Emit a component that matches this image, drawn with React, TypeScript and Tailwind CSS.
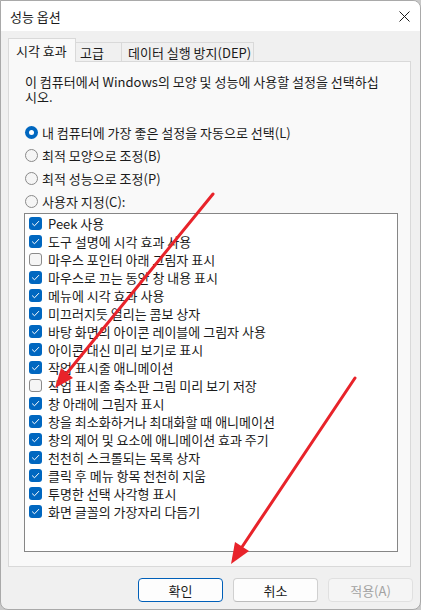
import React from "react";

const font = { fontFamily: '"Noto Sans CJK KR", "Noto Sans", sans-serif' };

const items: [string, boolean][] = [
  ["Peek 사용", true],
  ["도구 설명에 시각 효과 사용", true],
  ["마우스 포인터 아래 그림자 표시", false],
  ["마우스로 끄는 동안 창 내용 표시", true],
  ["메뉴에 시각 효과 사용", true],
  ["미끄러지듯 열리는 콤보 상자", true],
  ["바탕 화면의 아이콘 레이블에 그림자 사용", true],
  ["아이콘 대신 미리 보기로 표시", true],
  ["작업 표시줄 애니메이션", true],
  ["작업 표시줄 축소판 그림 미리 보기 저장", false],
  ["창 아래에 그림자 표시", true],
  ["창을 최소화하거나 최대화할 때 애니메이션", true],
  ["창의 제어 및 요소에 애니메이션 효과 주기", true],
  ["천천히 스크롤되는 목록 상자", true],
  ["클릭 후 메뉴 항목 천천히 지움", true],
  ["투명한 선택 사각형 표시", true],
  ["화면 글꼴의 가장자리 다듬기", true],
];

const radios: [string, boolean][] = [
  ["내 컴퓨터에 가장 좋은 설정을 자동으로 선택(L)", true],
  ["최적 모양으로 조정(B)", false],
  ["최적 성능으로 조정(P)", false],
  ["사용자 지정(C):", false],
];

function Check({ on }: { on: boolean }) {
  if (!on)
    return (
      <div className="w-[13px] h-[13px] rounded-[3px] border border-[#8a8a8a] bg-[#f5f5f5] shrink-0" />
    );
  return (
    <div className="w-[13px] h-[13px] rounded-[3px] bg-[#0067c0] shrink-0 flex items-center justify-center">
      <svg width="13" height="13" viewBox="0 0 13 13">
        <path d="M3.4 6.8 L5.5 8.8 L9.7 4.4" fill="none" stroke="#ffffff" strokeWidth="1" strokeLinecap="round" strokeLinejoin="round" />
      </svg>
    </div>
  );
}

function Radio({ on }: { on: boolean }) {
  if (on)
    return (
      <div className="w-[13px] h-[13px] rounded-full bg-[#0067c0] shrink-0 flex items-center justify-center">
        <div className="w-[5px] h-[5px] rounded-full bg-white" />
      </div>
    );
  return <div className="w-[13px] h-[13px] rounded-full border border-[#8a8a8a] bg-[#f5f5f5] shrink-0" />;
}

export default function App() {
  return (
    <div className="relative w-[421px] h-[610px] bg-[#c9c9c9] overflow-hidden text-[13px] text-[#1b1b1b]" style={font}>
      <div className="flex flex-col w-full h-full bg-[#f0f0f0] border border-[#a9a9a9] rounded-tr-[8px] rounded-b-[8px] overflow-hidden">
        {/* title bar */}
        <div className="h-[30px] bg-white flex items-center justify-between pl-[9px] pr-[10px] shrink-0">
          <span className="leading-[15px]">성능 옵션</span>
          <svg width="11" height="11" viewBox="0 0 11 11">
            <path d="M0.5 0.5 L10.5 10.5 M10.5 0.5 L0.5 10.5" stroke="#1b1b1b" strokeWidth="1" />
          </svg>
        </div>
        {/* body */}
        <div className="flex flex-col pl-[7px] pr-[7px] pt-[7px]">
          {/* tabs */}
          <div className="flex items-end h-[23px] relative z-10">
            <div className="w-[68px] h-[24px] -mb-[1px] bg-[#f9f9f9] border-t border-l border-r border-[#d9d9d9] flex items-center pl-[7px] leading-[15px]">
              시각 효과
            </div>
            <div className="w-[46px] h-[19px] bg-[#f0f0f0] border-t border-r border-[#d9d9d9] flex items-center pl-[4px] leading-[15px]">
              고급
            </div>
            <div className="w-[132px] h-[19px] bg-[#f0f0f0] border-t border-r border-[#d9d9d9] flex items-center pl-[6px] leading-[15px]">
              데이터 실행 방지(DEP)
            </div>
          </div>
          {/* panel */}
          <div className="w-[403px] h-[506px] bg-[#f9f9f9] border border-[#d9d9d9] flex flex-col">
            <div className="pl-[16px] pt-[12px] leading-[15px]">
              <div>이 컴퓨터에서 Windows의 모양 및 성능에 사용할 설정을 선택하십</div>
              <div>시오.</div>
            </div>
            <div className="flex flex-col mt-[17px] pl-[16px]">
              {radios.map(([t, on]) => (
                <div key={t} className="h-[23px] flex items-center gap-[4px]">
                  <Radio on={on} />
                  <span className="leading-[15px]">{t}</span>
                </div>
              ))}
            </div>
            <div className="ml-[15px] w-[374px] h-[339px] bg-white border border-[#868686] flex flex-col pl-[4px]">
              {items.map(([t, on]) => (
                <div key={t} className="h-[18px] flex items-center gap-[6px] shrink-0">
                  <Check on={on} />
                  <span className="leading-[15px]">{t}</span>
                </div>
              ))}
            </div>
          </div>
          {/* buttons */}
          <div className="flex justify-end gap-[10px] mt-[11px]">
            <button className="w-[85px] h-[24px] rounded-[4px] bg-[#fdfdfd] border border-[#005fb8] flex items-center justify-center leading-[15px] text-[#1b1b1b]">
              확인
            </button>
            <button className="w-[85px] h-[24px] rounded-[4px] bg-[#fdfdfd] border border-[#d0d0d0] border-b-[#bcbcbc] flex items-center justify-center leading-[15px] text-[#1b1b1b]">
              취소
            </button>
            <button className="w-[85px] h-[24px] rounded-[4px] bg-[#f5f5f5] border border-[#e0e0e0] flex items-center justify-center leading-[15px] text-[#a2a2a2]">
              적용(A)
            </button>
          </div>
        </div>
      </div>
      {/* red annotation arrows */}
      <svg className="absolute inset-0 pointer-events-none" width="421" height="610" viewBox="0 0 421 610">
        <line x1="213" y1="194" x2="67" y2="373" stroke="#e8232a" strokeWidth="3" strokeLinecap="round" />
        <polygon points="55,388 73,378 61,368" fill="#e8232a" />
        <line x1="355" y1="378" x2="242" y2="547" stroke="#e8232a" strokeWidth="3" strokeLinecap="round" />
        <polygon points="231,564 249,551 235,542" fill="#e8232a" />
      </svg>
    </div>
  );
}
